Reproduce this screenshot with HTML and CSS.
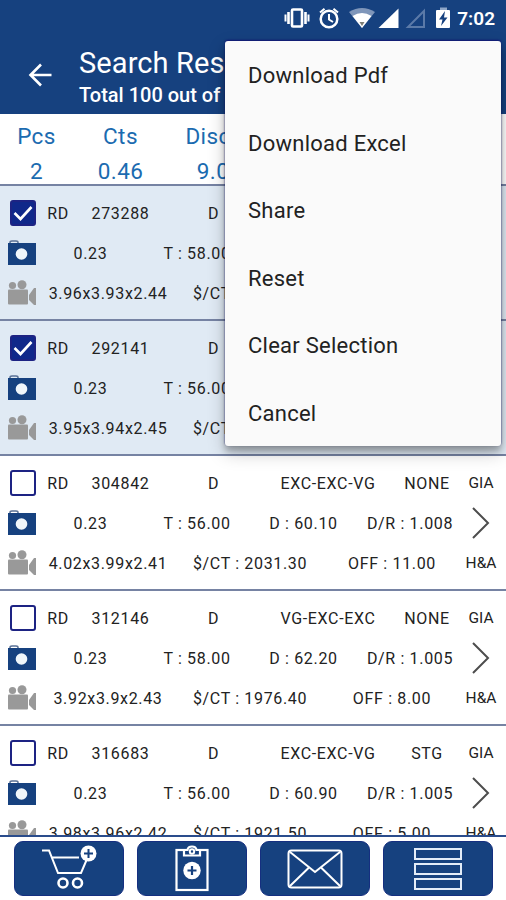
FILE: index.html
```html
<!DOCTYPE html>
<html lang="en">
<head>
    <meta charset="UTF-8">
    <meta name="viewport" content="width=device-width, initial-scale=1.0">
    <title>Search Result</title>
    <link rel="stylesheet" href="styles.css">
</head>
<body>
    <svg class="sprite">
        <symbol id="camera" viewBox="0 0 30 26">
            <path d="M3 4V2.500Q3 1 5 1h4q2 0 2 1.500V4" fill="none" stroke="#5a7196" stroke-width="1.500"/>
            <rect x="1" y="3" width="28" height="22" fill="#16417f"/>
            <circle cx="14.500" cy="14" r="5.800" fill="#f0f6fa"/>
        </symbol>
        <symbol id="video" viewBox="0 0 30 26">
            <circle cx="5.500" cy="5.500" r="3.600"/>
            <circle cx="15" cy="4.800" r="4.500"/>
            <rect x="1" y="9.500" width="20" height="15" rx="1"/>
            <path d="M22 15l5-7h2v17h-2l-5-5z"/>
        </symbol>
        <symbol id="arrow" viewBox="0 0 20 34">
            <path d="M2 2l15 15L2 32" fill="none" stroke="#4d4d4d" stroke-width="2"/>
        </symbol>
    </svg>

    <div class="screen">
        <div class="status">
            <svg width="216" height="36" viewBox="0 0 216 36" fill="none" stroke="#fff">
                <rect x="9" y="9.500" width="10" height="17" rx="1" stroke-width="2.600"/>
                <path d="M5.500 12v12M22.500 12v12" stroke-width="2.600"/>
                <path d="M2.500 14.500v7M25.500 14.500v7" stroke-width="2"/>
                <circle cx="46" cy="19" r="8.300" stroke-width="2.500"/>
                <path d="M46 14v5.500l4 2.500M37 12.500l4.500-3.800M55 12.500l-4.500-3.800" stroke-width="2"/>
                <path d="M66 12Q79 4 92 12L79 28z" fill="#7f96ba" stroke="none"/>
                <path d="M69.500 16Q79 10 88.500 16L79 28z" fill="#fff" stroke="none"/>
                <path d="M76.500 22h5L79 26z" fill="#7d7d75" stroke="none"/>
                <path d="M115.500 8.500V28H95.500z" fill="#fff" stroke="none"/>
                <path d="M141 11v16h-16z" stroke="#5b7aa8" stroke-width="2"/>
                <path d="M157 9h7" stroke="#8ea6c8" stroke-width="3"/>
                <rect x="153" y="10" width="14" height="18" rx="1" fill="#fff" stroke="none"/>
                <path d="M162 11l-6 8.500h3.500L158 26l6.500-8.500H161z" fill="#16417f" stroke="none"/>
            </svg>
            <span class="clock">7:02</span>
        </div>

        <div class="header">
            <svg class="back" width="26" height="24" viewBox="0 0 26 24" fill="none" stroke="#fff" stroke-width="2.600">
                <path d="M24.500 12H3.500M14 1.500L3.500 12l10.500 10.500"/>
            </svg>
            <div class="titles">
                <div class="title">Search Result</div>
                <div class="subtitle">Total 100 out of 100</div>
            </div>
        </div>

        <div class="summary">
            <div><span>Pcs</span><span>2</span></div>
            <div><span>Cts</span><span>0.46</span></div>
            <div><span>Disc %</span><span>9.00</span></div>
        </div>

        <div class="list" id="list"></div>

        <div class="toolbar">
            <button class="tool">
                <svg width="60" height="48" viewBox="0 0 60 48" fill="none" stroke="#fff" stroke-width="2">
                    <path d="M3 5.500h7l9 22.500h23l6-14M12.500 12.500H40"/>
                    <circle cx="24" cy="38" r="4.500" stroke-width="2.600"/>
                    <circle cx="38.500" cy="38" r="4.500" stroke-width="2.600"/>
                    <circle cx="49.500" cy="8.500" r="8" fill="#fff" stroke="none"/>
                    <path d="M49.500 4v9M45 8.500h9" stroke="#16417f"/>
                </svg>
            </button>
            <button class="tool">
                <svg width="36" height="48" viewBox="0 0 36 48" fill="none" stroke="#fff" stroke-width="2.200">
                    <rect x="2.500" y="5" width="31" height="40"/>
                    <path d="M10 10.500V5h3.500Q14 1.500 18 1.500T22.500 5H26v5.500z" fill="#16417f"/>
                    <circle cx="18" cy="6.500" r="2.200" stroke-width="2"/>
                    <circle cx="18" cy="25.500" r="8.700" fill="#fff" stroke="none"/>
                    <path d="M18 21v9M13.500 25.500h9" stroke="#16417f"/>
                </svg>
            </button>
            <button class="tool">
                <svg width="56" height="40" viewBox="0 0 56 40" fill="none" stroke="#fff" stroke-width="2">
                    <rect x="1.500" y="1.500" width="53" height="37" rx="3"/>
                    <path d="M3 3l25 20L53 3M3 37l18.500-18M53 37L34.500 19"/>
                </svg>
            </button>
            <button class="tool">
                <svg width="48" height="42" viewBox="0 0 48 42" fill="none" stroke="#e3ecf8" stroke-width="2">
                    <rect x="1" y="1" width="46" height="10"/>
                    <rect x="1" y="16" width="46" height="10"/>
                    <rect x="1" y="31" width="46" height="10"/>
                </svg>
            </button>
        </div>

        <ul class="menu">
            <li>Download Pdf</li>
            <li>Download Excel</li>
            <li>Share</li>
            <li>Reset</li>
            <li>Clear Selection</li>
            <li>Cancel</li>
        </ul>
    </div>

    <script src="script.js"></script>
</body>
</html>
```
FILE: styles.css
```css
* {
    box-sizing: border-box;
}

body {
    margin: 0;
    font-family: Roboto, sans-serif;
    color: #222;
}

.sprite {
    display: none;
}

.screen {
    position: relative;
    display: flex;
    flex-direction: column;
    width: 506px;
    height: 900px;
    overflow: hidden;
    background-color: #fff;
}

.status {
    display: flex;
    align-items: center;
    justify-content: flex-end;
    height: 36px;
    padding-right: 11px;
    background-color: #16417f;
}

.status svg {
    width: 216px;
    margin-right: -42px;
}

.clock {
    color: #fff;
    font-size: 19px;
    font-weight: 600;
    line-height: 37px;
}

.header {
    display: flex;
    height: 78px;
    padding-left: 27px;
    background-color: #16417f;
    color: #fff;
}

.back {
    margin-top: 27px;
}

.titles {
    margin-left: 26px;
    white-space: nowrap;
}

.title {
    margin-top: 10px;
    font-size: 29px;
    line-height: 35px;
    letter-spacing: 0.1px;
}

.subtitle {
    font-size: 20px;
    font-weight: 500;
    line-height: 29px;
}

.summary {
    display: flex;
    height: 70px;
    padding-top: 5px;
    color: #1b6bb0;
    font-size: 22.5px;
    letter-spacing: 0.4px;
}

.summary div {
    display: flex;
    flex-direction: column;
    width: 95px;
    text-align: center;
    line-height: 35px;
}

.summary div:first-child {
    width: 73px;
}

.summary div:last-child {
    width: 103px;
}

.list {
    flex: 1;
    overflow: hidden;
    min-height: 0;
}

.item {
    height: 135px;
    padding: 7px 0 0 7px;
    border-top: 2px solid #7683a3;
    font-size: 16px;
    letter-spacing: 0.66px;
}

.item.selected {
    background-color: #e0eaf4;
}

.line {
    display: grid;
    align-items: center;
    justify-items: center;
    height: 40px;
    white-space: nowrap;
}

.line1 {
    grid-template-columns: 30px 42px 83px 103px 126px 72px 36px;
}

.line2 {
    grid-template-columns: 30px 107px 106px 107px 106px 36px;
}

.line3 {
    grid-template-columns: 30px 142px 142px 142px 36px;
}

.line .last {
    font-size: 15.5px;
    letter-spacing: 0;
}

.icon {
    width: 30px;
    height: 26px;
    fill: #999;
}

.next {
    width: 20px;
    height: 34px;
}

.check {
    width: 26px;
    height: 26px;
    margin-left: 2px;
    border: 2px solid #1d2383;
    border-radius: 3px;
}

.selected .check {
    background-color: #10288a;
}

.check svg {
    display: none;
}

.selected .check svg {
    display: block;
}

.toolbar {
    display: grid;
    grid-template-columns: repeat(4, 110px);
    gap: 13px;
    height: 65px;
    padding: 4px 14px 0;
    border-top: 2px solid #2a4c8c;
}

.tool {
    display: flex;
    align-items: center;
    justify-content: center;
    height: 55px;
    padding: 0;
    border: 1px solid #152f80;
    border-radius: 9px;
    background-color: #16417f;
}

.menu {
    position: absolute;
    top: 41px;
    left: 225px;
    width: 276px;
    height: 405px;
    margin: 0;
    padding: 1px 0 0 23px;
    list-style: none;
    background-color: #fafafa;
    border-radius: 3px;
    box-shadow: 0 5px 6px rgba(0, 0, 0, 0.25), 0 7px 18px rgba(0, 0, 0, 0.22), 0 -1px 2px #13177a;
}

.menu li {
    height: 67.5px;
    font-size: 22px;
    line-height: 68px;
    letter-spacing: 0.25px;
}
```
FILE: script.js
```js
const stones = [
    { no: '273288', cts: '0.23', cut: 'EXC-EXC-EXC', fl: 'NONE', t: '58.00', d: '61.70', dr: '1.008', size: '3.96x3.93x2.44', price: '2054.10', off: '10.00', selected: true },
    { no: '292141', cts: '0.23', cut: 'EXC-EXC-EXC', fl: 'NONE', t: '56.00', d: '61.90', dr: '1.003', size: '3.95x3.94x2.45', price: '2099.70', off: '8.00', selected: true },
    { no: '304842', cts: '0.23', cut: 'EXC-EXC-VG', fl: 'NONE', t: '56.00', d: '60.10', dr: '1.008', size: '4.02x3.99x2.41', price: '2031.30', off: '11.00' },
    { no: '312146', cts: '0.23', cut: 'VG-EXC-EXC', fl: 'NONE', t: '58.00', d: '62.20', dr: '1.005', size: '3.92x3.9x2.43', price: '1976.40', off: '8.00' },
    { no: '316683', cts: '0.23', cut: 'EXC-EXC-VG', fl: 'STG', t: '56.00', d: '60.90', dr: '1.005', size: '3.98x3.96x2.42', price: '1921.50', off: '5.00' }
];

document.getElementById('list').innerHTML = stones.map(s => `
    <div class="item ${s.selected ? 'selected' : ''}">
        <div class="line line1">
            <span class="check"><svg width="22" height="22" viewBox="0 0 22 22"><path d="M2.500 11l6 6L19.500 5" fill="none" stroke="#fff" stroke-width="2.600"/></svg></span>
            <span>RD</span><span>${s.no}</span><span>D</span><span>${s.cut}</span><span>${s.fl}</span><span class="last">GIA</span>
        </div>
        <div class="line line2">
            <svg class="icon"><use href="#camera"/></svg>
            <span>${s.cts}</span><span>T : ${s.t}</span><span>D : ${s.d}</span><span>D/R : ${s.dr}</span>
            <svg class="next"><use href="#arrow"/></svg>
        </div>
        <div class="line line3">
            <svg class="icon"><use href="#video"/></svg>
            <span>${s.size}</span><span>$/CT : ${s.price}</span><span>OFF : ${s.off}</span><span class="last">H&amp;A</span>
        </div>
    </div>`).join('');
```
